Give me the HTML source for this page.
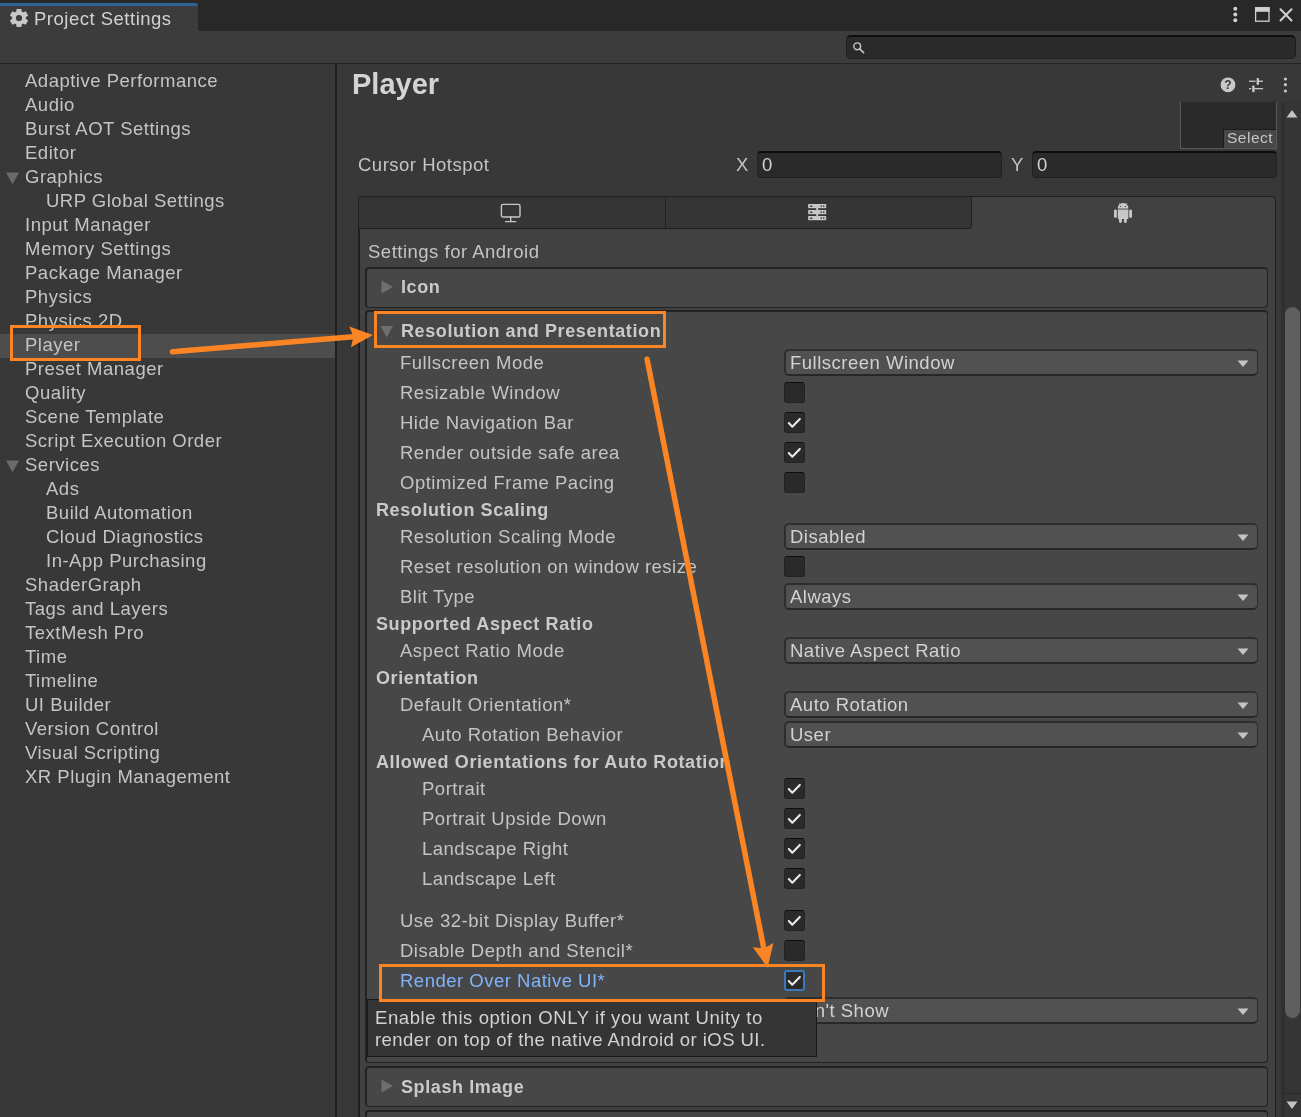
<!DOCTYPE html>
<html><head><meta charset="utf-8"><style>
html,body{margin:0;padding:0;}
body{width:1301px;height:1117px;position:relative;overflow:hidden;background:#383838;font-family:'Liberation Sans', sans-serif;}
</style></head><body><div style="position:absolute;left:0;top:0;width:1301px;height:1117px;overflow:hidden;will-change:transform;background:#383838">
<div style="position:absolute;left:0px;top:0px;width:1301px;height:31px;background:#282828;"></div>
<div style="position:absolute;left:0px;top:3px;width:198px;height:28px;background:#3c3c3c;border-top-right-radius:3px;"></div>
<div style="position:absolute;left:0px;top:3px;width:198px;height:3px;background:#2f6395;border-top-right-radius:3px;"></div>
<svg style="position:absolute;left:9px;top:8px" width="20" height="20" viewBox="0 0 20 20"><g fill="#c8c8c8"><circle cx="10" cy="10" r="6.9"/><path d="M7.6 0.9 L12.4 0.9 L12.9 5 L7.1 5 Z" transform="rotate(0 10 10)"/><path d="M7.6 0.9 L12.4 0.9 L12.9 5 L7.1 5 Z" transform="rotate(60 10 10)"/><path d="M7.6 0.9 L12.4 0.9 L12.9 5 L7.1 5 Z" transform="rotate(120 10 10)"/><path d="M7.6 0.9 L12.4 0.9 L12.9 5 L7.1 5 Z" transform="rotate(180 10 10)"/><path d="M7.6 0.9 L12.4 0.9 L12.9 5 L7.1 5 Z" transform="rotate(240 10 10)"/><path d="M7.6 0.9 L12.4 0.9 L12.9 5 L7.1 5 Z" transform="rotate(300 10 10)"/></g><circle cx="10" cy="10" r="3.1" fill="#3c3c3c"/></svg>
<div style="position:absolute;left:34px;top:8.59px;font:normal 18.5px/20px 'Liberation Sans', sans-serif;color:#d2d2d2;white-space:nowrap;letter-spacing:0.5px;">Project Settings</div>
<svg style="position:absolute;left:1228px;top:4px" width="70" height="24" viewBox="0 0 70 24">
<g fill="#d0d0d0"><circle cx="7.3" cy="4.8" r="2"/><circle cx="7.3" cy="10.6" r="2"/><circle cx="7.3" cy="16.2" r="2"/></g>
<rect x="27.6" y="3.8" width="13.4" height="13.4" fill="none" stroke="#d0d0d0" stroke-width="1.3"/>
<rect x="27" y="3.2" width="14.6" height="4.6" fill="#d0d0d0"/>
<path d="M52.5 5.2 L63.5 16.5 M63.5 5.2 L52.5 16.5" stroke="#d0d0d0" stroke-width="2" stroke-linecap="round"/>
</svg>
<div style="position:absolute;left:0px;top:31px;width:1301px;height:32px;background:#3c3c3c;"></div>
<div style="position:absolute;left:846px;top:35px;width:450px;height:24px;background:#2a2a2a;box-sizing:border-box;border:1px solid #1f1f1f;border-top:2px solid #0e0e0e;border-radius:5px;"></div>
<svg style="position:absolute;left:850px;top:40px" width="16" height="16" viewBox="0 0 16 16">
<circle cx="7.2" cy="6.3" r="3.4" fill="none" stroke="#c8c8c8" stroke-width="1.4"/>
<path d="M9.6 8.8 L13.6 12.6" stroke="#c8c8c8" stroke-width="1.6" stroke-linecap="round"/></svg>
<div style="position:absolute;left:0px;top:63px;width:1301px;height:1px;background:#232323;"></div>
<div style="position:absolute;left:0px;top:64px;width:335px;height:1053px;background:#383838;"></div>
<div style="position:absolute;left:0px;top:334px;width:335px;height:24px;background:#4d4d4d;"></div>
<div style="position:absolute;left:25px;top:70.59px;font:normal 18.5px/20px 'Liberation Sans', sans-serif;color:#c4c4c4;white-space:nowrap;letter-spacing:0.5px;">Adaptive Performance</div>
<div style="position:absolute;left:25px;top:94.59px;font:normal 18.5px/20px 'Liberation Sans', sans-serif;color:#c4c4c4;white-space:nowrap;letter-spacing:0.5px;">Audio</div>
<div style="position:absolute;left:25px;top:118.59px;font:normal 18.5px/20px 'Liberation Sans', sans-serif;color:#c4c4c4;white-space:nowrap;letter-spacing:0.5px;">Burst AOT Settings</div>
<div style="position:absolute;left:25px;top:142.59px;font:normal 18.5px/20px 'Liberation Sans', sans-serif;color:#c4c4c4;white-space:nowrap;letter-spacing:0.5px;">Editor</div>
<div style="position:absolute;left:25px;top:166.59px;font:normal 18.5px/20px 'Liberation Sans', sans-serif;color:#c4c4c4;white-space:nowrap;letter-spacing:0.5px;">Graphics</div>
<svg style="position:absolute;left:6px;top:172px" width="14" height="13" viewBox="0 0 14 13"><path d="M0 0.5 L13 0.5 L6.5 12.3 Z" fill="#6a6a6a"/></svg>
<div style="position:absolute;left:46px;top:190.59px;font:normal 18.5px/20px 'Liberation Sans', sans-serif;color:#c4c4c4;white-space:nowrap;letter-spacing:0.5px;">URP Global Settings</div>
<div style="position:absolute;left:25px;top:214.59px;font:normal 18.5px/20px 'Liberation Sans', sans-serif;color:#c4c4c4;white-space:nowrap;letter-spacing:0.5px;">Input Manager</div>
<div style="position:absolute;left:25px;top:238.59px;font:normal 18.5px/20px 'Liberation Sans', sans-serif;color:#c4c4c4;white-space:nowrap;letter-spacing:0.5px;">Memory Settings</div>
<div style="position:absolute;left:25px;top:262.59px;font:normal 18.5px/20px 'Liberation Sans', sans-serif;color:#c4c4c4;white-space:nowrap;letter-spacing:0.5px;">Package Manager</div>
<div style="position:absolute;left:25px;top:286.59px;font:normal 18.5px/20px 'Liberation Sans', sans-serif;color:#c4c4c4;white-space:nowrap;letter-spacing:0.5px;">Physics</div>
<div style="position:absolute;left:25px;top:310.59px;font:normal 18.5px/20px 'Liberation Sans', sans-serif;color:#c4c4c4;white-space:nowrap;letter-spacing:0.5px;">Physics 2D</div>
<div style="position:absolute;left:25px;top:334.59px;font:normal 18.5px/20px 'Liberation Sans', sans-serif;color:#c4c4c4;white-space:nowrap;letter-spacing:0.5px;">Player</div>
<div style="position:absolute;left:25px;top:358.59px;font:normal 18.5px/20px 'Liberation Sans', sans-serif;color:#c4c4c4;white-space:nowrap;letter-spacing:0.5px;">Preset Manager</div>
<div style="position:absolute;left:25px;top:382.59px;font:normal 18.5px/20px 'Liberation Sans', sans-serif;color:#c4c4c4;white-space:nowrap;letter-spacing:0.5px;">Quality</div>
<div style="position:absolute;left:25px;top:406.59px;font:normal 18.5px/20px 'Liberation Sans', sans-serif;color:#c4c4c4;white-space:nowrap;letter-spacing:0.5px;">Scene Template</div>
<div style="position:absolute;left:25px;top:430.59px;font:normal 18.5px/20px 'Liberation Sans', sans-serif;color:#c4c4c4;white-space:nowrap;letter-spacing:0.5px;">Script Execution Order</div>
<div style="position:absolute;left:25px;top:454.59px;font:normal 18.5px/20px 'Liberation Sans', sans-serif;color:#c4c4c4;white-space:nowrap;letter-spacing:0.5px;">Services</div>
<svg style="position:absolute;left:6px;top:460px" width="14" height="13" viewBox="0 0 14 13"><path d="M0 0.5 L13 0.5 L6.5 12.3 Z" fill="#6a6a6a"/></svg>
<div style="position:absolute;left:46px;top:478.59px;font:normal 18.5px/20px 'Liberation Sans', sans-serif;color:#c4c4c4;white-space:nowrap;letter-spacing:0.5px;">Ads</div>
<div style="position:absolute;left:46px;top:502.59px;font:normal 18.5px/20px 'Liberation Sans', sans-serif;color:#c4c4c4;white-space:nowrap;letter-spacing:0.5px;">Build Automation</div>
<div style="position:absolute;left:46px;top:526.59px;font:normal 18.5px/20px 'Liberation Sans', sans-serif;color:#c4c4c4;white-space:nowrap;letter-spacing:0.5px;">Cloud Diagnostics</div>
<div style="position:absolute;left:46px;top:550.59px;font:normal 18.5px/20px 'Liberation Sans', sans-serif;color:#c4c4c4;white-space:nowrap;letter-spacing:0.5px;">In-App Purchasing</div>
<div style="position:absolute;left:25px;top:574.59px;font:normal 18.5px/20px 'Liberation Sans', sans-serif;color:#c4c4c4;white-space:nowrap;letter-spacing:0.5px;">ShaderGraph</div>
<div style="position:absolute;left:25px;top:598.59px;font:normal 18.5px/20px 'Liberation Sans', sans-serif;color:#c4c4c4;white-space:nowrap;letter-spacing:0.5px;">Tags and Layers</div>
<div style="position:absolute;left:25px;top:622.59px;font:normal 18.5px/20px 'Liberation Sans', sans-serif;color:#c4c4c4;white-space:nowrap;letter-spacing:0.5px;">TextMesh Pro</div>
<div style="position:absolute;left:25px;top:646.59px;font:normal 18.5px/20px 'Liberation Sans', sans-serif;color:#c4c4c4;white-space:nowrap;letter-spacing:0.5px;">Time</div>
<div style="position:absolute;left:25px;top:670.59px;font:normal 18.5px/20px 'Liberation Sans', sans-serif;color:#c4c4c4;white-space:nowrap;letter-spacing:0.5px;">Timeline</div>
<div style="position:absolute;left:25px;top:694.59px;font:normal 18.5px/20px 'Liberation Sans', sans-serif;color:#c4c4c4;white-space:nowrap;letter-spacing:0.5px;">UI Builder</div>
<div style="position:absolute;left:25px;top:718.59px;font:normal 18.5px/20px 'Liberation Sans', sans-serif;color:#c4c4c4;white-space:nowrap;letter-spacing:0.5px;">Version Control</div>
<div style="position:absolute;left:25px;top:742.59px;font:normal 18.5px/20px 'Liberation Sans', sans-serif;color:#c4c4c4;white-space:nowrap;letter-spacing:0.5px;">Visual Scripting</div>
<div style="position:absolute;left:25px;top:766.59px;font:normal 18.5px/20px 'Liberation Sans', sans-serif;color:#c4c4c4;white-space:nowrap;letter-spacing:0.5px;">XR Plugin Management</div>
<div style="position:absolute;left:335px;top:64px;width:2px;height:1053px;background:#1f1f1f;"></div>
<div style="position:absolute;left:337px;top:64px;width:964px;height:1053px;background:#383838;"></div>
<div style="position:absolute;left:352px;top:73.95px;font:bold 29px/20px 'Liberation Sans', sans-serif;color:#d4d4d4;white-space:nowrap;letter-spacing:0px;">Player</div>
<svg style="position:absolute;left:1218px;top:74px" width="76" height="22" viewBox="0 0 76 22">
<circle cx="10" cy="10.8" r="7.4" fill="#c8c8c8"/>
<text x="10" y="15.3" text-anchor="middle" font-family="Liberation Sans" font-weight="bold" font-size="12" fill="#383838">?</text>
<g fill="#c8c8c8">
<rect x="31" y="6.6" width="6.6" height="1.3"/><rect x="40.6" y="6.6" width="4.4" height="1.3"/>
<rect x="38.6" y="3.9" width="2.4" height="6.9" rx="0.9"/>
<rect x="31" y="14" width="2.2" height="1.3"/><rect x="36.2" y="14" width="8.8" height="1.3"/>
<rect x="34.2" y="11.6" width="2.4" height="6.6" rx="0.9"/>
</g>
<g fill="#c8c8c8"><circle cx="67.4" cy="5" r="1.6"/><circle cx="67.4" cy="10.7" r="1.6"/><circle cx="67.4" cy="17" r="1.6"/></g>
</svg>
<div style="position:absolute;left:1180px;top:102px;width:97px;height:47px;background:#2a2a2a;box-sizing:border-box;border:1px solid #5a5a5a;border-top:none;"></div>
<div style="position:absolute;left:1223px;top:129px;width:53px;height:19px;background:#474747;border-top:1px solid #1c1c1c;border-left:1px solid #1c1c1c;box-sizing:border-box;"></div>
<div style="position:absolute;left:1227px;top:127.63px;font:normal 15.5px/20px 'Liberation Sans', sans-serif;color:#c4c4c4;white-space:nowrap;letter-spacing:0.5px;">Select</div>
<div style="position:absolute;left:358px;top:154.59px;font:normal 18.5px/20px 'Liberation Sans', sans-serif;color:#c4c4c4;white-space:nowrap;letter-spacing:0.5px;">Cursor Hotspot</div>
<div style="position:absolute;left:736px;top:154.59px;font:normal 18.5px/20px 'Liberation Sans', sans-serif;color:#c4c4c4;white-space:nowrap;letter-spacing:0.5px;">X</div>
<div style="position:absolute;left:757px;top:151px;width:245px;height:27px;background:#2a2a2a;box-sizing:border-box;border:1px solid #212121;border-top:2px solid #0d0d0d;border-radius:4px;"></div>
<div style="position:absolute;left:762px;top:154.59px;font:normal 18.5px/20px 'Liberation Sans', sans-serif;color:#d2d2d2;white-space:nowrap;letter-spacing:0.5px;">0</div>
<div style="position:absolute;left:1011px;top:154.59px;font:normal 18.5px/20px 'Liberation Sans', sans-serif;color:#c4c4c4;white-space:nowrap;letter-spacing:0.5px;">Y</div>
<div style="position:absolute;left:1032px;top:151px;width:245px;height:27px;background:#2a2a2a;box-sizing:border-box;border:1px solid #212121;border-top:2px solid #0d0d0d;border-radius:4px;"></div>
<div style="position:absolute;left:1037px;top:154.59px;font:normal 18.5px/20px 'Liberation Sans', sans-serif;color:#d2d2d2;white-space:nowrap;letter-spacing:0.5px;">0</div>
<div style="position:absolute;left:358px;top:196px;width:918px;height:931px;background:#414141;box-sizing:border-box;border:1px solid #202020;border-left:2px solid #202020;border-radius:4px;"></div>
<div style="position:absolute;left:359px;top:197px;width:306px;height:31px;background:#353535;border-top-left-radius:3px;"></div>
<div style="position:absolute;left:665px;top:197px;width:1px;height:31px;background:#202020;"></div>
<div style="position:absolute;left:666px;top:197px;width:305px;height:31px;background:#353535;"></div>
<div style="position:absolute;left:971px;top:197px;width:1px;height:31px;background:#202020;"></div>
<div style="position:absolute;left:359px;top:228px;width:612px;height:1px;background:#202020;"></div>
<svg style="position:absolute;left:500px;top:203px" width="22" height="20" viewBox="0 0 22 20">
<rect x="1.4" y="1.4" width="18.6" height="12.6" rx="1.6" fill="none" stroke="#c8c8c8" stroke-width="1.4"/>
<path d="M10.7 14 L10.7 18.4 M5.6 18.6 L15.8 18.6" stroke="#c8c8c8" stroke-width="1.4" stroke-linecap="round"/></svg>
<svg style="position:absolute;left:808px;top:203px" width="19" height="18" viewBox="0 0 19 18">
<g fill="#c8c8c8"><rect x="0.2" y="1" width="18" height="4.2"/><rect x="0.2" y="7" width="18" height="4.2"/><rect x="0.2" y="13" width="18" height="4.2"/>
<rect x="8.2" y="4" width="2" height="4"/><rect x="8.2" y="10" width="2" height="4"/></g>
<g fill="#383838"><rect x="2" y="2.4" width="2.5" height="1.5" rx="0.7"/><rect x="2" y="8.4" width="2.5" height="1.5" rx="0.7"/><rect x="2" y="14.4" width="2.5" height="1.5" rx="0.7"/>
<rect x="12.6" y="2.4" width="1.4" height="1.5"/><rect x="15" y="2.4" width="1.4" height="1.5"/>
<rect x="12.6" y="8.4" width="1.4" height="1.5"/><rect x="15" y="8.4" width="1.4" height="1.5"/>
<rect x="12.6" y="14.4" width="1.4" height="1.5"/><rect x="15" y="14.4" width="1.4" height="1.5"/></g></svg>
<svg style="position:absolute;left:1113px;top:202px" width="20" height="22" viewBox="0 0 20 22">
<g fill="#c8c8c8">
<path d="M4.8 6 A5.3 5 0 0 1 15.4 6 Z"/>
<rect x="4.8" y="6" width="10.6" height="1.9" fill="#8e8e8e"/>
<path d="M4.8 7.9 L15.4 7.9 L15.4 16.2 Q15.4 16.9 14.7 16.9 L5.5 16.9 Q4.8 16.9 4.8 16.2 Z"/>
<rect x="1" y="7.4" width="2.8" height="8.6" rx="1.4"/><rect x="16.2" y="7.4" width="2.8" height="8.6" rx="1.4"/>
<rect x="6" y="15" width="2.9" height="6" rx="1.4"/><rect x="10.9" y="15" width="2.9" height="6" rx="1.4"/>
</g>
<path d="M6.3 1.3 L7.5 3 M13.9 1.3 L12.7 3" stroke="#c8c8c8" stroke-width="1"/>
<g fill="#5a5a5a"><circle cx="7.6" cy="4.4" r="0.7"/><circle cx="12.4" cy="4.4" r="0.7"/></g>
</svg>
<div style="position:absolute;left:368px;top:241.59px;font:normal 18.5px/20px 'Liberation Sans', sans-serif;color:#c4c4c4;white-space:nowrap;letter-spacing:0.5px;">Settings for Android</div>
<div style="position:absolute;left:365px;top:267px;width:903px;height:41px;background:#474747;box-sizing:border-box;border:2px solid #222222;border-width:2px 1px 1px 2px;border-radius:4px;"></div>
<svg style="position:absolute;left:381px;top:280px" width="13" height="14" viewBox="0 0 13 14"><path d="M0.5 0.5 L12 7 L0.5 13.5 Z" fill="#6f6f6f"/></svg>
<div style="position:absolute;left:401px;top:276.76px;font:bold 18px/20px 'Liberation Sans', sans-serif;color:#cacaca;white-space:nowrap;letter-spacing:0.6px;">Icon</div>
<div style="position:absolute;left:365px;top:310px;width:903px;height:753px;background:#474747;box-sizing:border-box;border:2px solid #222222;border-width:2px 1px 1px 2px;border-radius:4px;"></div>
<svg style="position:absolute;left:380px;top:325px" width="14" height="13" viewBox="0 0 14 13"><path d="M0.5 1 L13 1 L6.75 12.5 Z" fill="#6f6f6f"/></svg>
<div style="position:absolute;left:401px;top:320.76px;font:bold 18px/20px 'Liberation Sans', sans-serif;color:#cacaca;white-space:nowrap;letter-spacing:0.6px;">Resolution and Presentation</div>
<div style="position:absolute;left:400px;top:352.59px;font:normal 18.5px/20px 'Liberation Sans', sans-serif;color:#c4c4c4;white-space:nowrap;letter-spacing:0.5px;">Fullscreen Mode</div>
<div style="position:absolute;left:784px;top:349px;width:474px;height:27px;background:#515151;box-sizing:border-box;border:2px solid #2e2e2e;border-right-width:1px;border-bottom-color:#272727;border-radius:5px;"></div>
<div style="position:absolute;left:790px;top:352.59px;font:normal 18.5px/20px 'Liberation Sans', sans-serif;color:#d2d2d2;white-space:nowrap;letter-spacing:0.5px;">Fullscreen Window</div>
<svg style="position:absolute;left:1237px;top:360px" width="12" height="8" viewBox="0 0 12 8"><path d="M0.5 0.5 L11.5 0.5 L6 7 Z" fill="#c4c4c4"/></svg>
<div style="position:absolute;left:400px;top:382.59px;font:normal 18.5px/20px 'Liberation Sans', sans-serif;color:#c4c4c4;white-space:nowrap;letter-spacing:0.5px;">Resizable Window</div>
<div style="position:absolute;left:784px;top:382px;width:21px;height:21px;background:#2a2a2a;box-sizing:border-box;border:1px solid #232323;border-top-color:#0f0f0f;border-radius:3px;"></div>
<div style="position:absolute;left:400px;top:412.59px;font:normal 18.5px/20px 'Liberation Sans', sans-serif;color:#c4c4c4;white-space:nowrap;letter-spacing:0.5px;">Hide Navigation Bar</div>
<div style="position:absolute;left:784px;top:412px;width:21px;height:21px;background:#2a2a2a;box-sizing:border-box;border:1px solid #232323;border-top-color:#0f0f0f;border-radius:3px;"></div>
<svg style="position:absolute;left:787px;top:417px" width="15" height="12" viewBox="0 0 15 12"><path d="M1.8 6.1 L5.3 9.7 L12.8 1.9" fill="none" stroke="#e8e8e8" stroke-width="2.1" stroke-linecap="round" stroke-linejoin="round"/></svg>
<div style="position:absolute;left:400px;top:442.59px;font:normal 18.5px/20px 'Liberation Sans', sans-serif;color:#c4c4c4;white-space:nowrap;letter-spacing:0.5px;">Render outside safe area</div>
<div style="position:absolute;left:784px;top:442px;width:21px;height:21px;background:#2a2a2a;box-sizing:border-box;border:1px solid #232323;border-top-color:#0f0f0f;border-radius:3px;"></div>
<svg style="position:absolute;left:787px;top:447px" width="15" height="12" viewBox="0 0 15 12"><path d="M1.8 6.1 L5.3 9.7 L12.8 1.9" fill="none" stroke="#e8e8e8" stroke-width="2.1" stroke-linecap="round" stroke-linejoin="round"/></svg>
<div style="position:absolute;left:400px;top:472.59px;font:normal 18.5px/20px 'Liberation Sans', sans-serif;color:#c4c4c4;white-space:nowrap;letter-spacing:0.5px;">Optimized Frame Pacing</div>
<div style="position:absolute;left:784px;top:472px;width:21px;height:21px;background:#2a2a2a;box-sizing:border-box;border:1px solid #232323;border-top-color:#0f0f0f;border-radius:3px;"></div>
<div style="position:absolute;left:376px;top:499.76px;font:bold 18px/20px 'Liberation Sans', sans-serif;color:#cacaca;white-space:nowrap;letter-spacing:0.6px;">Resolution Scaling</div>
<div style="position:absolute;left:400px;top:526.59px;font:normal 18.5px/20px 'Liberation Sans', sans-serif;color:#c4c4c4;white-space:nowrap;letter-spacing:0.5px;">Resolution Scaling Mode</div>
<div style="position:absolute;left:784px;top:523px;width:474px;height:27px;background:#515151;box-sizing:border-box;border:2px solid #2e2e2e;border-right-width:1px;border-bottom-color:#272727;border-radius:5px;"></div>
<div style="position:absolute;left:790px;top:526.59px;font:normal 18.5px/20px 'Liberation Sans', sans-serif;color:#d2d2d2;white-space:nowrap;letter-spacing:0.5px;">Disabled</div>
<svg style="position:absolute;left:1237px;top:534px" width="12" height="8" viewBox="0 0 12 8"><path d="M0.5 0.5 L11.5 0.5 L6 7 Z" fill="#c4c4c4"/></svg>
<div style="position:absolute;left:400px;top:556.59px;font:normal 18.5px/20px 'Liberation Sans', sans-serif;color:#c4c4c4;white-space:nowrap;letter-spacing:0.5px;">Reset resolution on window resize</div>
<div style="position:absolute;left:784px;top:556px;width:21px;height:21px;background:#2a2a2a;box-sizing:border-box;border:1px solid #232323;border-top-color:#0f0f0f;border-radius:3px;"></div>
<div style="position:absolute;left:400px;top:586.59px;font:normal 18.5px/20px 'Liberation Sans', sans-serif;color:#c4c4c4;white-space:nowrap;letter-spacing:0.5px;">Blit Type</div>
<div style="position:absolute;left:784px;top:583px;width:474px;height:27px;background:#515151;box-sizing:border-box;border:2px solid #2e2e2e;border-right-width:1px;border-bottom-color:#272727;border-radius:5px;"></div>
<div style="position:absolute;left:790px;top:586.59px;font:normal 18.5px/20px 'Liberation Sans', sans-serif;color:#d2d2d2;white-space:nowrap;letter-spacing:0.5px;">Always</div>
<svg style="position:absolute;left:1237px;top:594px" width="12" height="8" viewBox="0 0 12 8"><path d="M0.5 0.5 L11.5 0.5 L6 7 Z" fill="#c4c4c4"/></svg>
<div style="position:absolute;left:376px;top:613.76px;font:bold 18px/20px 'Liberation Sans', sans-serif;color:#cacaca;white-space:nowrap;letter-spacing:0.6px;">Supported Aspect Ratio</div>
<div style="position:absolute;left:400px;top:640.59px;font:normal 18.5px/20px 'Liberation Sans', sans-serif;color:#c4c4c4;white-space:nowrap;letter-spacing:0.5px;">Aspect Ratio Mode</div>
<div style="position:absolute;left:784px;top:637px;width:474px;height:27px;background:#515151;box-sizing:border-box;border:2px solid #2e2e2e;border-right-width:1px;border-bottom-color:#272727;border-radius:5px;"></div>
<div style="position:absolute;left:790px;top:640.59px;font:normal 18.5px/20px 'Liberation Sans', sans-serif;color:#d2d2d2;white-space:nowrap;letter-spacing:0.5px;">Native Aspect Ratio</div>
<svg style="position:absolute;left:1237px;top:648px" width="12" height="8" viewBox="0 0 12 8"><path d="M0.5 0.5 L11.5 0.5 L6 7 Z" fill="#c4c4c4"/></svg>
<div style="position:absolute;left:376px;top:667.76px;font:bold 18px/20px 'Liberation Sans', sans-serif;color:#cacaca;white-space:nowrap;letter-spacing:0.6px;">Orientation</div>
<div style="position:absolute;left:400px;top:694.59px;font:normal 18.5px/20px 'Liberation Sans', sans-serif;color:#c4c4c4;white-space:nowrap;letter-spacing:0.5px;">Default Orientation*</div>
<div style="position:absolute;left:784px;top:691px;width:474px;height:27px;background:#515151;box-sizing:border-box;border:2px solid #2e2e2e;border-right-width:1px;border-bottom-color:#272727;border-radius:5px;"></div>
<div style="position:absolute;left:790px;top:694.59px;font:normal 18.5px/20px 'Liberation Sans', sans-serif;color:#d2d2d2;white-space:nowrap;letter-spacing:0.5px;">Auto Rotation</div>
<svg style="position:absolute;left:1237px;top:702px" width="12" height="8" viewBox="0 0 12 8"><path d="M0.5 0.5 L11.5 0.5 L6 7 Z" fill="#c4c4c4"/></svg>
<div style="position:absolute;left:422px;top:724.59px;font:normal 18.5px/20px 'Liberation Sans', sans-serif;color:#c4c4c4;white-space:nowrap;letter-spacing:0.5px;">Auto Rotation Behavior</div>
<div style="position:absolute;left:784px;top:721px;width:474px;height:27px;background:#515151;box-sizing:border-box;border:2px solid #2e2e2e;border-right-width:1px;border-bottom-color:#272727;border-radius:5px;"></div>
<div style="position:absolute;left:790px;top:724.59px;font:normal 18.5px/20px 'Liberation Sans', sans-serif;color:#d2d2d2;white-space:nowrap;letter-spacing:0.5px;">User</div>
<svg style="position:absolute;left:1237px;top:732px" width="12" height="8" viewBox="0 0 12 8"><path d="M0.5 0.5 L11.5 0.5 L6 7 Z" fill="#c4c4c4"/></svg>
<div style="position:absolute;left:376px;top:751.76px;font:bold 18px/20px 'Liberation Sans', sans-serif;color:#cacaca;white-space:nowrap;letter-spacing:0.6px;">Allowed Orientations for Auto Rotation</div>
<div style="position:absolute;left:422px;top:778.59px;font:normal 18.5px/20px 'Liberation Sans', sans-serif;color:#c4c4c4;white-space:nowrap;letter-spacing:0.5px;">Portrait</div>
<div style="position:absolute;left:784px;top:778px;width:21px;height:21px;background:#2a2a2a;box-sizing:border-box;border:1px solid #232323;border-top-color:#0f0f0f;border-radius:3px;"></div>
<svg style="position:absolute;left:787px;top:783px" width="15" height="12" viewBox="0 0 15 12"><path d="M1.8 6.1 L5.3 9.7 L12.8 1.9" fill="none" stroke="#e8e8e8" stroke-width="2.1" stroke-linecap="round" stroke-linejoin="round"/></svg>
<div style="position:absolute;left:422px;top:808.59px;font:normal 18.5px/20px 'Liberation Sans', sans-serif;color:#c4c4c4;white-space:nowrap;letter-spacing:0.5px;">Portrait Upside Down</div>
<div style="position:absolute;left:784px;top:808px;width:21px;height:21px;background:#2a2a2a;box-sizing:border-box;border:1px solid #232323;border-top-color:#0f0f0f;border-radius:3px;"></div>
<svg style="position:absolute;left:787px;top:813px" width="15" height="12" viewBox="0 0 15 12"><path d="M1.8 6.1 L5.3 9.7 L12.8 1.9" fill="none" stroke="#e8e8e8" stroke-width="2.1" stroke-linecap="round" stroke-linejoin="round"/></svg>
<div style="position:absolute;left:422px;top:838.59px;font:normal 18.5px/20px 'Liberation Sans', sans-serif;color:#c4c4c4;white-space:nowrap;letter-spacing:0.5px;">Landscape Right</div>
<div style="position:absolute;left:784px;top:838px;width:21px;height:21px;background:#2a2a2a;box-sizing:border-box;border:1px solid #232323;border-top-color:#0f0f0f;border-radius:3px;"></div>
<svg style="position:absolute;left:787px;top:843px" width="15" height="12" viewBox="0 0 15 12"><path d="M1.8 6.1 L5.3 9.7 L12.8 1.9" fill="none" stroke="#e8e8e8" stroke-width="2.1" stroke-linecap="round" stroke-linejoin="round"/></svg>
<div style="position:absolute;left:422px;top:868.59px;font:normal 18.5px/20px 'Liberation Sans', sans-serif;color:#c4c4c4;white-space:nowrap;letter-spacing:0.5px;">Landscape Left</div>
<div style="position:absolute;left:784px;top:868px;width:21px;height:21px;background:#2a2a2a;box-sizing:border-box;border:1px solid #232323;border-top-color:#0f0f0f;border-radius:3px;"></div>
<svg style="position:absolute;left:787px;top:873px" width="15" height="12" viewBox="0 0 15 12"><path d="M1.8 6.1 L5.3 9.7 L12.8 1.9" fill="none" stroke="#e8e8e8" stroke-width="2.1" stroke-linecap="round" stroke-linejoin="round"/></svg>
<div style="position:absolute;left:400px;top:910.59px;font:normal 18.5px/20px 'Liberation Sans', sans-serif;color:#c4c4c4;white-space:nowrap;letter-spacing:0.5px;">Use 32-bit Display Buffer*</div>
<div style="position:absolute;left:784px;top:910px;width:21px;height:21px;background:#2a2a2a;box-sizing:border-box;border:1px solid #232323;border-top-color:#0f0f0f;border-radius:3px;"></div>
<svg style="position:absolute;left:787px;top:915px" width="15" height="12" viewBox="0 0 15 12"><path d="M1.8 6.1 L5.3 9.7 L12.8 1.9" fill="none" stroke="#e8e8e8" stroke-width="2.1" stroke-linecap="round" stroke-linejoin="round"/></svg>
<div style="position:absolute;left:400px;top:940.59px;font:normal 18.5px/20px 'Liberation Sans', sans-serif;color:#c4c4c4;white-space:nowrap;letter-spacing:0.5px;">Disable Depth and Stencil*</div>
<div style="position:absolute;left:784px;top:940px;width:21px;height:21px;background:#2a2a2a;box-sizing:border-box;border:1px solid #232323;border-top-color:#0f0f0f;border-radius:3px;"></div>
<div style="position:absolute;left:400px;top:970.59px;font:normal 18.5px/20px 'Liberation Sans', sans-serif;color:#80b3fc;white-space:nowrap;letter-spacing:0.5px;">Render Over Native UI*</div>
<div style="position:absolute;left:784px;top:970px;width:21px;height:21px;background:#2a2a2a;box-sizing:border-box;border:2px solid #3a79bb;border-radius:3px;"></div>
<svg style="position:absolute;left:787px;top:975px" width="15" height="12" viewBox="0 0 15 12"><path d="M1.8 6.1 L5.3 9.7 L12.8 1.9" fill="none" stroke="#e8e8e8" stroke-width="2.1" stroke-linecap="round" stroke-linejoin="round"/></svg>
<div style="position:absolute;left:784px;top:997px;width:474px;height:27px;background:#515151;box-sizing:border-box;border:2px solid #2e2e2e;border-right-width:1px;border-bottom-color:#272727;border-radius:5px;"></div>
<div style="position:absolute;left:790px;top:1000.59px;font:normal 18.5px/20px 'Liberation Sans', sans-serif;color:#d2d2d2;white-space:nowrap;letter-spacing:0.5px;">Don't Show</div>
<svg style="position:absolute;left:1237px;top:1008px" width="12" height="8" viewBox="0 0 12 8"><path d="M0.5 0.5 L11.5 0.5 L6 7 Z" fill="#c4c4c4"/></svg>
<div style="position:absolute;left:365px;top:1066px;width:903px;height:41px;background:#474747;box-sizing:border-box;border:2px solid #222222;border-width:2px 1px 1px 2px;border-radius:4px;"></div>
<svg style="position:absolute;left:381px;top:1079px" width="13" height="14" viewBox="0 0 13 14"><path d="M0.5 0.5 L12 7 L0.5 13.5 Z" fill="#6f6f6f"/></svg>
<div style="position:absolute;left:401px;top:1076.76px;font:bold 18px/20px 'Liberation Sans', sans-serif;color:#cacaca;white-space:nowrap;letter-spacing:0.6px;">Splash Image</div>
<div style="position:absolute;left:365px;top:1110px;width:903px;height:20px;background:#474747;box-sizing:border-box;border:2px solid #222222;border-width:2px 1px 1px 2px;border-radius:4px;"></div>
<div style="position:absolute;left:367px;top:999px;width:450px;height:58px;background:#353535;box-sizing:border-box;border:1px solid #1a1a1a;"></div>
<div style="position:absolute;left:375px;top:1007.59px;font:normal 18.5px/20px 'Liberation Sans', sans-serif;color:#d2d2d2;white-space:nowrap;letter-spacing:0.58px;">Enable this option ONLY if you want Unity to</div>
<div style="position:absolute;left:375px;top:1029.59px;font:normal 18.5px/20px 'Liberation Sans', sans-serif;color:#d2d2d2;white-space:nowrap;letter-spacing:0.44px;">render on top of the native Android or iOS UI.</div>
<div style="position:absolute;left:1281px;top:102px;width:20px;height:1015px;background:#353535;"></div>
<div style="position:absolute;left:1281px;top:102px;width:4px;height:1015px;background:#303030;"></div>
<svg style="position:absolute;left:1286px;top:109px" width="12" height="9" viewBox="0 0 12 9"><path d="M0.5 8.5 L11.5 8.5 L6 1 Z" fill="#c4c4c4"/></svg>
<div style="position:absolute;left:1285px;top:307px;width:15px;height:711px;background:#5f5f5f;border-radius:7.5px;"></div>
<div style="position:absolute;left:1282px;top:1093px;width:19px;height:1px;background:#2a2a2a;"></div>
<svg style="position:absolute;left:1286px;top:1101px" width="12" height="9" viewBox="0 0 12 9"><path d="M0.5 0.5 L11.5 0.5 L6 8 Z" fill="#c4c4c4"/></svg>
<div style="position:absolute;left:10px;top:325px;width:131px;height:36px;background:transparent;box-sizing:border-box;border:3px solid #fb8524;"></div>
<div style="position:absolute;left:374px;top:311px;width:292px;height:37px;background:transparent;box-sizing:border-box;border:3px solid #fb8524;"></div>
<div style="position:absolute;left:379px;top:964px;width:446px;height:38px;background:transparent;box-sizing:border-box;border:3px solid #fb8524;"></div>
<svg style="position:absolute;left:0;top:0" width="1301" height="1117" viewBox="0 0 1301 1117">
<path d="M172.50 351.70 L353.07 336.66" stroke="#fb8524" stroke-width="5.5" stroke-linecap="round"/><polygon points="373.00,335.00 350.95,347.37 352.80,339.44 352.34,333.96 349.21,326.45" fill="#fb8524"/>
<path d="M647.10 359.30 L763.71 948.08" stroke="#fb8524" stroke-width="5.5" stroke-linecap="round"/><polygon points="767.60,967.70 752.83,947.18 760.92,948.12 766.31,947.06 773.43,943.10" fill="#fb8524"/>
</svg>
</div></body></html>
